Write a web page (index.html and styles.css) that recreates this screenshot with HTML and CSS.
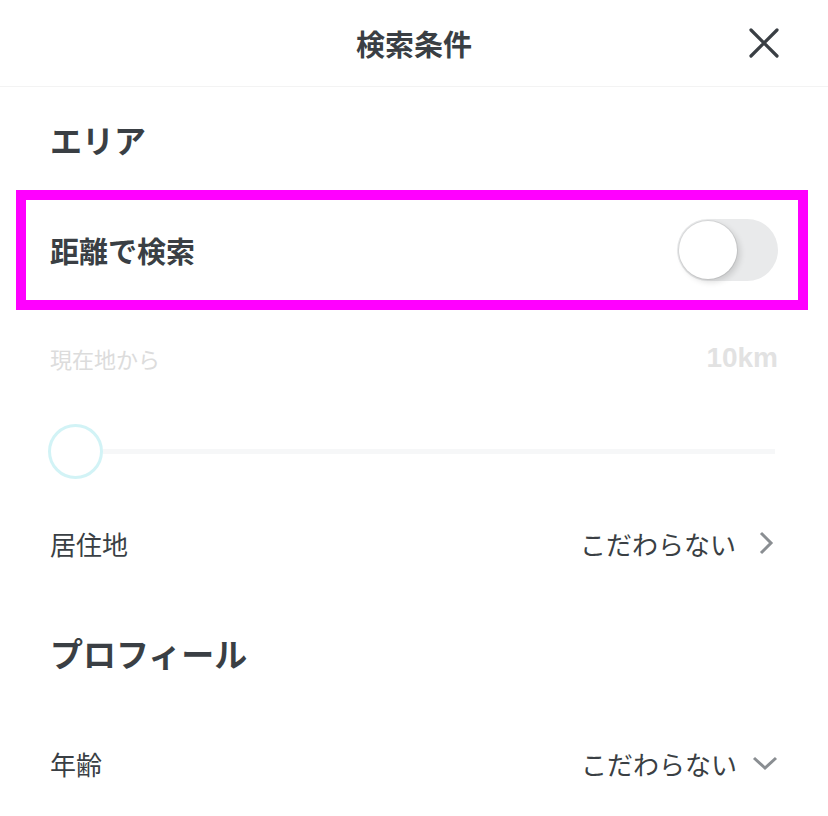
FILE: index.html
```html
<!DOCTYPE html>
<html lang="ja">
<head>
    <meta charset="UTF-8">
    <meta name="viewport" content="width=device-width, initial-scale=1.0">
    <title>検索条件</title>
    <link rel="stylesheet" href="styles.css">
</head>
<body>
    <div class="header">
        <div class="title">検索条件</div>
        <div class="close">
            <svg width="32" height="32" viewBox="0 0 32 32"><path d="M3 3L29 29M29 3L3 29" stroke="#3a3f44" stroke-width="3.2" stroke-linecap="round"/></svg>
        </div>
    </div>
    <div class="content">
        <div class="section">エリア</div>
        <div class="highlight">
            <div class="row">
                <span class="label-bold">距離で検索</span>
                <div class="toggle"><div class="knob"></div></div>
            </div>
        </div>
        <div class="row dist">
            <span class="muted">現在地から</span>
            <span class="km">10km</span>
        </div>
        <div class="slider">
            <div class="thumb"></div>
            <div class="track"></div>
        </div>
        <div class="row item">
            <span>居住地</span>
            <span class="value">こだわらない
                <svg width="16" height="24" viewBox="0 0 16 24"><path d="M3 2L13 12L3 22" fill="none" stroke="#8a8e92" stroke-width="3"/></svg>
            </span>
        </div>
        <div class="section profile">プロフィール</div>
        <div class="row item">
            <span>年齢</span>
            <span class="value down">こだわらない
                <svg width="26" height="16" viewBox="0 0 26 16"><path d="M2 3L13 13L24 3" fill="none" stroke="#8a8e92" stroke-width="3"/></svg>
            </span>
        </div>
    </div>
</body>
</html>
```

FILE: styles.css
```css
*{margin:0;padding:0;box-sizing:border-box;}
body{width:828px;background:#fff;color:#3a3f44;font-family:"Noto Sans CJK JP","Noto Sans",sans-serif;}

.header{height:87px;border-bottom:1px solid #f3f3f3;display:flex;align-items:center;justify-content:center;position:relative;}
.header .title{font-size:29px;font-weight:bold;}
.header .close{position:absolute;right:48px;top:27px;width:32px;height:32px;}

.content{padding:0 50px;}
.section{height:103px;display:flex;align-items:center;font-size:32px;font-weight:bold;}
.section.profile{height:126px;font-size:33px;}

.row{display:flex;align-items:center;justify-content:space-between;}
.highlight{height:120px;margin:0 -30px 0 -34px;padding:0 20px 0 24px;border:10px solid #ff00ff;display:flex;flex-direction:column;justify-content:center;}
.label-bold{font-size:29px;font-weight:bold;}

.toggle{width:101px;height:62px;border-radius:31px;background:#e9eaeb;padding:2px;}
.toggle .knob{width:58px;height:58px;border-radius:50%;background:#fff;box-shadow:0 0 0 1px rgba(0,0,0,0.07),3px 3px 6px rgba(0,0,0,0.14);}

.dist{height:96px;}
.muted{font-size:22px;color:#dcdcdc;}
.km{font-family:"Liberation Sans",sans-serif;font-size:28px;font-weight:bold;color:#e2e2e2;}

.slider{height:90px;display:flex;align-items:center;}
.slider .thumb{width:55px;height:55px;border-radius:50%;border:3px solid #d2f3f6;background:#fff;margin-left:-2px;flex:none;}
.slider .track{flex:1;height:5px;background:#f6f7f8;margin-right:3px;}

.item{height:94px;font-size:26px;}
.value{display:flex;align-items:center;gap:22px;margin-right:4px;}
.value.down{gap:15px;margin-right:0;}
```
